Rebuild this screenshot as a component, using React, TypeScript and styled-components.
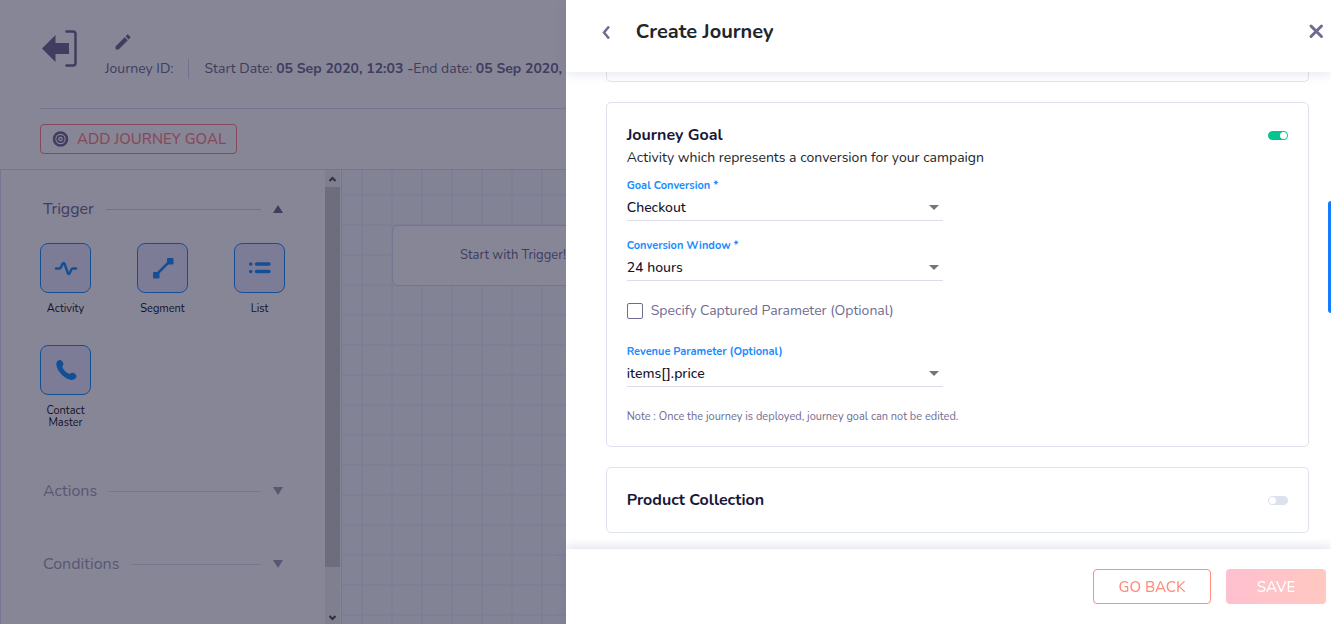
import React from "react";
import styled, { createGlobalStyle, css } from "styled-components";

const GlobalStyle = createGlobalStyle`
  *, *::before, *::after { box-sizing: border-box; }
  html, body, #root { height: 100%; }
  body {
    margin: 0;
    overflow: hidden;
    background: #fff;
    font-family: Nunito, Lato, "Liberation Sans", sans-serif;
    font-size: 14px;
    line-height: 20px;
    color: #6f6c92;
  }
  button, input, select { font: inherit; color: inherit; margin: 0; }
  h1, h2, h3, p { margin: 0; }
`;

/* ---------- journey builder ---------- */

const Builder = styled.main`
  display: flex;
  flex-direction: column;
  height: 100vh;
  overflow: hidden;
  background: #fff;
`;

const TopBar = styled.header`
  display: flex;
  gap: 27px;
  height: 109px;
  margin-left: 40px;
  padding-top: 30px;
  border-bottom: 1px solid #dcdcee;
  white-space: nowrap;
`;

const IconButton = styled.button`
  display: flex;
  align-items: center;
  justify-content: center;
  padding: 0;
  border: 0;
  background: none;
  cursor: pointer;
`;

const ExitButton = styled(IconButton)`
  flex: none;
  width: 38px;
  height: 38px;
`;

const JourneyInfo = styled.div`
  display: flex;
  flex-direction: column;
  gap: 6px;
  padding-top: 1px;
`;

const EditButton = styled(IconButton)`
  width: 20px;
  height: 22px;
  margin-left: 8px;
`;

const Meta = styled.div`
  display: flex;
  gap: 15px;

  strong { font-weight: 700; }
`;

const MetaItem = styled.span<{ $divided?: boolean }>`
  ${(p) =>
    p.$divided &&
    css`
      padding-left: 15px;
      border-left: 1px solid #d6d6ea;
    `}
`;

const GoalBar = styled.div`
  padding: 15px 0 15px 40px;
`;

const OutlineButton = styled.button`
  height: 35px;
  width: 118px;
  padding: 0;
  border: 1px solid #ff8c7c;
  border-radius: 4px;
  background: #fff;
  color: #ff8c7c;
  font-size: 15px;
  font-weight: 500;
  text-transform: uppercase;
  cursor: pointer;
`;

const GoalButton = styled(OutlineButton)`
  display: flex;
  align-items: center;
  gap: 8px;
  width: auto;
  height: 30px;
  padding: 0 10px 0 11px;
  border-color: #ff8484;
  color: #ff8484;
`;

const Workspace = styled.div`
  display: flex;
  flex: 1;
  min-height: 0;
  border-top: 1px solid #d8dcee;
  border-left: 1px solid #d8dcee;
`;

const Palette = styled.aside`
  display: flex;
  flex: none;
  width: 341px;
  border-right: 1px solid #d8dcee;
`;

const PaletteContent = styled.div`
  flex: 1;
  padding: 28px 40px 0 39px;
`;

const Group = styled.section<{ $muted?: boolean }>`
  margin-bottom: 51px;
  opacity: ${(p) => (p.$muted ? 0.65 : 1)};
`;

const GroupHeader = styled.button`
  display: flex;
  align-items: center;
  gap: 12px;
  width: 100%;
  height: 22px;
  padding: 0 2px 0 3px;
  border: 0;
  background: none;
  font-size: 16px;
  cursor: pointer;
`;

const Rule = styled.span`
  flex: 1;
  height: 1px;
  background: #d4d2ec;
`;

const Tiles = styled.div`
  display: grid;
  grid-template-columns: repeat(3, 51px);
  justify-content: space-between;
  row-gap: 30px;
  padding-top: 23px;
`;

const Tile = styled.div`
  display: flex;
  flex-direction: column;
  align-items: center;
  gap: 10px;
  font-size: 11px;
  line-height: 12px;
  text-align: center;
  color: #16142c;
`;

const TileIcon = styled.span`
  display: flex;
  align-items: center;
  justify-content: center;
  width: 51px;
  height: 50px;
  border: 1px solid #1990ff;
  border-radius: 8px;
  background: #e9ebff;
`;

const ScrollTrack = styled.div`
  display: flex;
  flex-direction: column;
  align-items: center;
  justify-content: space-between;
  width: 15px;
  margin-right: 1px;
  background: #f1f1f1;
`;

const ScrollArrow = styled.svg`
  flex: none;
  width: 15px;
  height: 17px;
`;

const ScrollSpace = styled.div`
  flex: 1;
  width: 100%;
  padding-bottom: 40px;
`;

const ScrollThumb = styled.div`
  width: 100%;
  height: 100%;
  background: #cdcdcd;
`;

const Canvas = styled.div`
  position: relative;
  flex: 1;
  overflow: hidden;
  background-color: #f4faff;
  background-image: linear-gradient(#ecf0ff 2px, transparent 2px),
    linear-gradient(90deg, #ecf0ff 2px, transparent 2px);
  background-size: 30px 30px;
  background-position: 19px 24px;
`;

const StartNode = styled.div`
  position: absolute;
  left: 50px;
  top: 55px;
  display: flex;
  align-items: center;
  justify-content: center;
  width: 242px;
  height: 61px;
  padding-bottom: 2px;
  border: 1px solid #d8dcee;
  border-radius: 6px;
  background: #fff;
  font-size: 13px;
`;

/* ---------- drawer ---------- */

const Backdrop = styled.div`
  position: fixed;
  inset: 0;
  display: flex;
  justify-content: flex-end;
  background: rgba(15, 13, 45, 0.5);
`;

const Drawer = styled.section`
  display: flex;
  flex-direction: column;
  width: 57.5%;
  height: 100%;
  background: #fff;
`;

const DrawerHeader = styled.header`
  z-index: 1;
  display: flex;
  flex: none;
  align-items: center;
  height: 72px;
  padding: 0 6px 10px 32px;
  background: #fff;
  box-shadow: 0 2px 10px rgba(100, 110, 170, 0.16);
`;

const DrawerTitle = styled.h1`
  flex: 1;
  margin-left: 22px;
  padding-top: 2px;
  font-size: 20px;
  line-height: 28px;
  font-weight: 700;
  color: #212529;
`;

const DrawerBody = styled.div`
  display: flex;
  flex: 1;
  flex-direction: column;
  gap: 20px;
  min-height: 0;
  padding: 0 22px 0 40px;
  overflow: hidden;
`;

const Card = styled.section`
  flex: none;
  padding: 20px;
  border: 1px solid #dfe2ee;
  border-radius: 5px;
`;

const CardEnd = styled(Card)`
  height: 10px;
  padding: 0;
  border-top: 0;
  border-radius: 0 0 5px 5px;
`;

const CardHeader = styled.div`
  display: flex;
  align-items: center;
  justify-content: space-between;
  height: 24px;
`;

const CardTitle = styled.h2`
  font-size: 16px;
  line-height: 24px;
  font-weight: 700;
  color: #17173a;
`;

const CardText = styled.p`
  line-height: 22px;
  color: #212529;
`;

const Switch = styled.input`
  display: flex;
  align-items: center;
  appearance: none;
  width: 20px;
  height: 9px;
  padding: 0 1px;
  border-radius: 5px;
  background: #dde0ee;
  cursor: pointer;

  &::before {
    content: "";
    width: 7px;
    height: 7px;
    border-radius: 50%;
    background: #fff;
  }

  &:checked {
    justify-content: flex-end;
    background: #05c48f;
  }
`;

const Fields = styled.div`
  display: flex;
  flex-direction: column;
  align-items: flex-start;
  gap: 17px;
  padding-top: 9px;
`;

const FieldBox = styled.div`
  display: flex;
  flex-direction: column;
  width: 316px;
  max-width: 100%;
  height: 43px;
  border-bottom: 1px solid #dcdcec;
`;

const FieldLabel = styled.label`
  font-size: 11px;
  line-height: 16px;
  font-weight: 700;
  color: #198cff;
`;

const SelectRow = styled.div`
  display: grid;
  align-items: center;

  & > * { grid-area: 1 / 1; }
`;

const Select = styled.select`
  width: 100%;
  height: 27px;
  padding: 0;
  border: 0;
  outline: 0;
  appearance: none;
  background: none;
  font-weight: 500;
  color: #12122e;
`;

const Caret = styled.svg`
  justify-self: end;
  width: 10px;
  height: 5px;
  margin-right: 4px;
  pointer-events: none;
`;

const CheckLabel = styled.label`
  display: flex;
  align-items: center;
  gap: 8px;
  height: 26px;
  margin-bottom: 3px;
`;

const CheckBox = styled.input`
  appearance: none;
  width: 16px;
  height: 16px;
  border: 1px solid #6f6c92;
  border-radius: 2px;
  background: #fff;
`;

const Note = styled.p`
  font-size: 11px;
  line-height: 16px;
  padding: 5px 0 1px;
`;

const DrawerFooter = styled.footer`
  z-index: 1;
  display: flex;
  flex: none;
  justify-content: flex-end;
  gap: 15px;
  height: 75px;
  padding: 20px 5px 0;
  background: #fff;
  box-shadow: 0 -2px 10px rgba(90, 100, 160, 0.2);
`;

const SaveButton = styled(OutlineButton)`
  width: 100px;
  border: 0;
  background: linear-gradient(100deg, #ffc0d0, #ffc8c0);
  color: #fff;
`;

const SideTab = styled.button`
  position: fixed;
  top: 201px;
  right: 0;
  width: 3px;
  height: 112px;
  padding: 0;
  border: 0;
  border-radius: 4px 0 0 4px;
  background: #147dff;
`;

const icons = {
  activity: (
    <path d="M2 12.500h3.400c1 0 1.300-.7 1.700-1.600l1.400-3.200c.5-1.100 1.700-1.100 2.100.1l3.200 9.300c.4 1.100 1.500 1.100 2 0l1.300-3c.4-1 .8-1.600 1.800-1.600H22" fill="none" stroke="#1990ff" strokeWidth="2.500" strokeLinecap="round" />
  ),
  segment: (
    <g fill="#1990ff">
      <path d="M5 19 19 5" stroke="#1990ff" strokeWidth="2.500" />
      <rect x="2" y="16" width="6.500" height="6.500" rx="1" />
      <rect x="16" y="2" width="6.500" height="6.500" rx="1" />
    </g>
  ),
  list: (
    <path d="M2.700 8h.1M2.700 15.500h.1M8.500 8h12.500M8.500 15.500h12.500" stroke="#1990ff" strokeWidth="3.400" strokeLinecap="round" />
  ),
  contact: (
    <path d="M2.300 5.500C2.500 3.300 4.200 1.700 6 1.900c1.800.2 3.400 2.300 3.500 4.200.1 1.200-1.300 1.900-1.100 2.900.5 2.400 4.200 6 6.700 6.700 1.100.3 1.800-1.200 3.100-1 2 .2 4.300 1.600 4.300 3.400 0 2.300-2.100 3.900-4.400 3.900C11.500 22 1.900 12.500 2.300 5.500Z" fill="#1990ff" />
  ),
};

function PaletteTile({ icon, label }: { icon: keyof typeof icons; label: string }) {
  return (
    <Tile>
      <TileIcon>
        <svg width="24" height="24" viewBox="0 0 24 24" aria-hidden="true">{icons[icon]}</svg>
      </TileIcon>
      {label}
    </Tile>
  );
}

function GroupTitle({ label, open }: { label: string; open?: boolean }) {
  return (
    <GroupHeader aria-expanded={!!open}>
      {label}
      <Rule />
      <svg width="10" height="8" viewBox="0 0 10 8" aria-hidden="true">
        <path d={open ? "M5 0 10 8H0Z" : "M0 0h10L5 8Z"} fill="#6f6c92" />
      </svg>
    </GroupHeader>
  );
}

function Field({ id, label, value }: { id: string; label: string; value: string }) {
  return (
    <FieldBox>
      <FieldLabel htmlFor={id}>{label}</FieldLabel>
      <SelectRow>
        <Select id={id} defaultValue={value}>
          <option>{value}</option>
        </Select>
        <Caret viewBox="0 0 10 5" aria-hidden="true">
          <path d="M0 0h10L5 5Z" fill="#757575" />
        </Caret>
      </SelectRow>
    </FieldBox>
  );
}

export default function App() {
  return (
    <>
      <GlobalStyle />
      <Builder>
        <TopBar>
          <ExitButton aria-label="Exit">
            <svg width="38" height="38" viewBox="0 0 38 38">
              <path d="M2 18.500 15.500 5v8H29v11H15.500v8Z" fill="#6f6c92" />
              <path d="M26.500 1.500H33q2.500 0 2.500 2.500v29q0 2.500-2.500 2.500h-6.500" fill="none" stroke="#6f6c92" strokeWidth="2.500" strokeLinecap="round" />
            </svg>
          </ExitButton>
          <JourneyInfo>
            <EditButton aria-label="Edit journey name">
              <svg width="22" height="22" viewBox="0 0 24 24">
                <path d="M3 17.250V21h3.750L17.810 9.940l-3.750-3.750L3 17.250ZM20.710 7.040a1 1 0 0 0 0-1.410l-2.340-2.340a1 1 0 0 0-1.410 0l-1.830 1.830 3.750 3.750 1.830-1.830Z" fill="#6f6c92" />
              </svg>
            </EditButton>
            <Meta>
              <MetaItem>Journey ID:</MetaItem>
              <MetaItem $divided>
                Start Date: <strong>05 Sep 2020, 12:03 -</strong>End date: <strong>05 Sep 2020, 12:03</strong>
              </MetaItem>
            </Meta>
          </JourneyInfo>
        </TopBar>
        <GoalBar>
          <GoalButton>
            <svg width="17" height="16" viewBox="0 0 17 16" fill="none" stroke="#6f6c92" aria-hidden="true">
              <circle cx="8.500" cy="8" r="6.500" strokeWidth="2.600" />
              <circle cx="8.500" cy="8" r="3.200" strokeWidth="1.800" />
              <circle cx="8.500" cy="8" r="1.100" fill="#6f6c92" stroke="none" />
            </svg>
            Add Journey Goal
          </GoalButton>
        </GoalBar>
        <Workspace>
          <Palette>
            <PaletteContent>
              <Group>
                <GroupTitle label="Trigger" open />
                <Tiles>
                  <PaletteTile icon="activity" label="Activity" />
                  <PaletteTile icon="segment" label="Segment" />
                  <PaletteTile icon="list" label="List" />
                  <PaletteTile icon="contact" label="Contact Master" />
                </Tiles>
              </Group>
              <Group $muted>
                <GroupTitle label="Actions" />
              </Group>
              <Group $muted>
                <GroupTitle label="Conditions" />
              </Group>
            </PaletteContent>
            <ScrollTrack>
              <ScrollArrow viewBox="0 0 15 17" aria-hidden="true">
                <path d="m4.500 11 3-3 3 3" fill="none" stroke="#505050" strokeWidth="2" />
              </ScrollArrow>
              <ScrollSpace>
                <ScrollThumb />
              </ScrollSpace>
              <ScrollArrow viewBox="0 0 15 17" aria-hidden="true">
                <path d="m4.500 9 3 3 3-3" fill="none" stroke="#505050" strokeWidth="2" />
              </ScrollArrow>
            </ScrollTrack>
          </Palette>
          <Canvas>
            <StartNode>Start with Trigger!</StartNode>
          </Canvas>
        </Workspace>
      </Builder>

      <Backdrop>
        <Drawer role="dialog" aria-labelledby="drawer-title">
          <DrawerHeader>
            <IconButton aria-label="Back">
              <svg width="16" height="16" viewBox="0 0 16 16" fill="none" stroke="#6f6c92" strokeWidth="2.500">
                <path d="M11 3.500 6 9.500l5 6" />
              </svg>
            </IconButton>
            <DrawerTitle id="drawer-title">Create Journey</DrawerTitle>
            <IconButton aria-label="Close">
              <svg width="18" height="18" viewBox="0 0 18 18" fill="none" stroke="#6f6c92" strokeWidth="3" strokeLinecap="round">
                <path d="m4 4 10.500 10.500M14.500 4 4 14.500" />
              </svg>
            </IconButton>
          </DrawerHeader>
          <DrawerBody>
            <CardEnd />
            <Card>
              <CardHeader>
                <CardTitle>Journey Goal</CardTitle>
                <Switch type="checkbox" aria-label="Journey Goal" defaultChecked />
              </CardHeader>
              <CardText>Activity which represents a conversion for your campaign</CardText>
              <Fields>
                <Field id="goal" label="Goal Conversion *" value="Checkout" />
                <Field id="window" label="Conversion Window *" value="24 hours" />
                <CheckLabel>
                  <CheckBox type="checkbox" />
                  Specify Captured Parameter (Optional)
                </CheckLabel>
                <Field id="revenue" label="Revenue Parameter (Optional)" value="items[].price" />
                <Note>Note : Once the journey is deployed, journey goal can not be edited.</Note>
              </Fields>
            </Card>
            <Card>
              <CardHeader>
                <CardTitle>Product Collection</CardTitle>
                <Switch type="checkbox" aria-label="Product Collection" />
              </CardHeader>
            </Card>
          </DrawerBody>
          <DrawerFooter>
            <OutlineButton>Go Back</OutlineButton>
            <SaveButton>Save</SaveButton>
          </DrawerFooter>
        </Drawer>
      </Backdrop>
      <SideTab aria-label="Open feedback" />
    </>
  );
}
